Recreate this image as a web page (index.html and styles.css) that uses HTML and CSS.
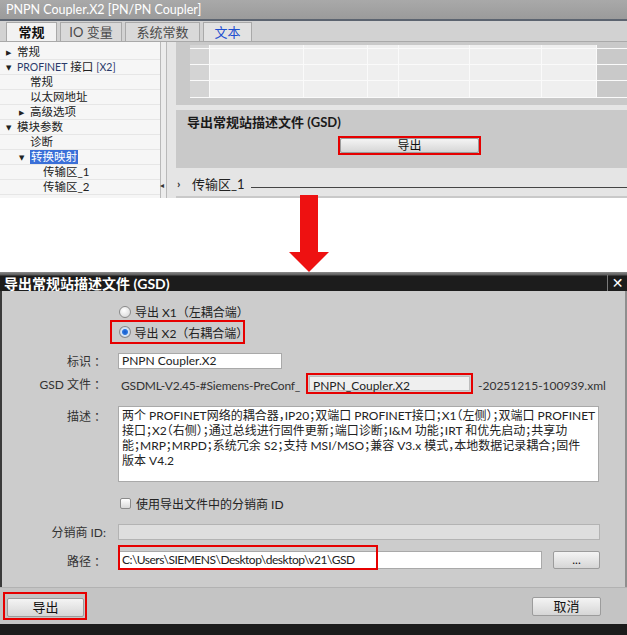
FILE: index.html
```html
<!DOCTYPE html>
<html lang="zh-CN">
<head>
  <meta charset="UTF-8">
  <title>导出常规站描述文件 (GSD)</title>
  <link rel="stylesheet" href="styles.css">
</head>
<body>
  <!-- 上半部分：巡视窗口截图 -->
  <div class="inspector">
    <div class="insp-title">PNPN Coupler.X2 [PN/PN Coupler]</div>
    <div class="tabs">
      <span class="tab tab-active">常规</span>
      <span class="tab">IO 变量</span>
      <span class="tab">系统常数</span>
      <span class="tab tab-blue">文本</span>
    </div>
    <div class="insp-body">
      <div class="tree">
        <div class="tree-row"><span class="tri">▶</span>常规</div>
        <div class="tree-row"><span class="tri">▼</span><span class="pn">PROFINET</span> 接口 <span class="pn">[X2]</span></div>
        <div class="tree-row lvl1">常规</div>
        <div class="tree-row lvl1">以太网地址</div>
        <div class="tree-row lvl1t"><span class="tri">▶</span>高级选项</div>
        <div class="tree-row"><span class="tri">▼</span>模块参数</div>
        <div class="tree-row lvl1">诊断</div>
        <div class="tree-row lvl1t"><span class="tri">▼</span><span class="sel">转换映射</span></div>
        <div class="tree-row lvl2">传输区_1</div>
        <div class="tree-row lvl2">传输区_2</div>
      </div>
      <div class="tree-scroll"><span class="scroll-arrow">◂</span></div>
      <div class="content">
        <div class="grid-area">
          <div class="grid">
            <div class="grid-row r0"><span class="gc head"></span><span class="gc w1"></span><span class="gc w2"></span><span class="gc w3"></span><span class="gc w4"></span><span class="gc w5"></span><span class="gc w6"></span></div>
            <div class="grid-row"><span class="gc head"></span><span class="gc w1"></span><span class="gc w2"></span><span class="gc w3"></span><span class="gc w4"></span><span class="gc w5"></span><span class="gc w6"></span></div>
            <div class="grid-row"><span class="gc head"></span><span class="gc w1"></span><span class="gc w2"></span><span class="gc w3"></span><span class="gc w4"></span><span class="gc w5"></span><span class="gc w6"></span></div>
            <div class="grid-row r3"><span class="gc head"></span><span class="gc w1"></span><span class="gc w2"></span><span class="gc w3"></span><span class="gc w4"></span><span class="gc w5"></span><span class="gc w6"></span></div>
          </div>
        </div>
        <div class="gsd-section">
          <div class="gsd-title">导出常规站描述文件 (GSD)</div>
          <div class="mark top-btn-mark"><button class="btn top-btn">导出</button></div>
        </div>
        <div class="group-row">
          <span class="chev">›</span>
          <span class="group-name">传输区_1</span>
          <span class="group-rule"></span>
        </div>
        <div class="bottom-strip"></div>
      </div>
    </div>
  </div>

  <!-- 箭头 -->
  <div class="arrow">
    <svg width="627" height="77" viewBox="0 0 627 77">
      <rect x="300" y="0" width="18" height="58" fill="#ee1111"/>
      <polygon points="289,57 329,57 309,77" fill="#ee1111"/>
    </svg>
  </div>

  <!-- 下半部分：导出对话框 -->
  <div class="dialog">
    <div class="dlg-title">
      <span>导出常规站描述文件 (GSD)</span>
      <span class="dlg-close">✕</span>
    </div>
    <div class="dlg-body">
      <div class="radio-row"><span class="radio"></span>导出 X1（左耦合端）</div>
      <div class="mark radio-mark"><span class="radio checked"></span>导出 X2（右耦合端）</div>

      <div class="field first">
        <span class="label">标识 ：</span>
        <div class="input name-input">PNPN Coupler.X2</div>
      </div>
      <div class="field gsd-field">
        <span class="label">GSD 文件 ：</span>
        <span class="gsd-prefix">GSDML-V2.45-#Siemens-PreConf_</span>
        <div class="mark gsd-mark"><div class="gsd-name">PNPN_Coupler.X2</div></div>
        <span class="gsd-suffix">-20251215-100939.xml</span>
      </div>
      <div class="field desc-field">
        <span class="label">描述 ：</span>
        <div class="input desc">
          <div class="desc-line">两个 PROFINET网络的耦合器，IP20；双端口 PROFINET接口；X1（左侧）；双端口 PROFINET</div>
          <div class="desc-line">接口；X2（右侧）；通过总线进行固件更新；端口诊断；I&amp;M 功能；IRT 和优先启动；共享功</div>
          <div class="desc-line">能；MRP；MRPD；系统冗余 S2；支持 MSI/MSO；兼容 V3.x 模式，本地数据记录耦合；固件</div>
          <div class="desc-line">版本 V4.2</div>
        </div>
      </div>
      <div class="check-row"><span class="checkbox"></span>使用导出文件中的分销商 ID</div>
      <div class="field">
        <span class="label">分销商 ID:</span>
        <div class="input disabled"></div>
      </div>
      <div class="field path-field">
        <span class="label">路径 ：</span>
        <div class="input path-input">
          C:\Users\SIEMENS\Desktop\desktop\v21\GSD
          <span class="path-mark"></span>
        </div>
        <button class="btn browse">...</button>
      </div>
    </div>
    <div class="dlg-foot">
      <div class="mark foot-mark"><button class="btn foot-btn">导出</button></div>
      <button class="btn foot-btn cancel">取消</button>
    </div>
    <div class="dlg-edge"></div>
  </div>
</body>
</html>
```

FILE: styles.css
```css
* {
  margin: 0;
  padding: 0;
  box-sizing: border-box;
}

body {
  width: 627px;
  background: #ffffff;
  font-family: "Lato", "Noto Sans CJK SC", sans-serif;
  font-size: 12px;
  color: #222;
}

/* ---------- 巡视窗口 ---------- */

.inspector {
  height: 198px;
  background: #cfcfcf;
  overflow: hidden;
}

.insp-title {
  height: 21px;
  padding-left: 6px;
  line-height: 19px;
  font-size: 12.5px;
  color: #ffffff;
  background: linear-gradient(#a9a9a9, #9b9b9b);
  border-bottom: 2px solid #5c6470;
}

.tabs {
  height: 21px;
  display: flex;
  align-items: flex-end;
  gap: 3px;
  padding-left: 6px;
  background: #d2d2d2;
  border-bottom: 1px solid #a9a9a9;
}

.tab {
  height: 19px;
  line-height: 18px;
  font-size: 13px;
  text-align: center;
  color: #4a4a4a;
  background: #d9d9d9;
  border: 1px solid #a9a9a9;
  border-bottom: none;
  overflow: hidden;
}

.tab:nth-child(1) { width: 51px; }
.tab:nth-child(2) { width: 62px; }
.tab:nth-child(3) { width: 75px; }
.tab:nth-child(4) { width: 49px; }

.tab-active {
  background: #f2f2f2;
  color: #111;
  font-weight: bold;
}

.tab-blue {
  background: #e2e2e2;
  color: #1f4fd0;
}

.insp-body {
  display: flex;
  height: 156px;
}

.tree {
  width: 160px;
  padding-top: 3px;
  background: #f6f6f6;
}

.tree-row {
  height: 15px;
  line-height: 14px;
  padding-left: 6px;
  font-size: 11.5px;
  color: #222;
  white-space: nowrap;
  overflow: hidden;
  border-bottom: 1px solid #e6e6e6;
}

.tree-row.lvl1 { padding-left: 30px; }
.tree-row.lvl1t { padding-left: 19px; }
.tree-row.lvl2 { padding-left: 43px; }

.tri {
  display: inline-block;
  width: 11px;
  font-family: "DejaVu Sans", sans-serif;
  font-size: 7px;
  vertical-align: 1px;
}

.pn {
  font-size: 10.5px;
  color: #2b3a6a;
}

.sel {
  display: inline-block;
  height: 14px;
  padding: 0 1px;
  background: #3a6fd8;
  color: #ffffff;
}

.tree-scroll {
  position: relative;
  width: 7px;
  background: #ececec;
  border-left: 1px solid #b9b9b9;
  border-right: 1px solid #b9b9b9;
}

.scroll-arrow {
  position: absolute;
  left: -1px;
  top: 139px;
  font-family: "DejaVu Sans", sans-serif;
  font-size: 8px;
  color: #333;
}

.content {
  flex: 1;
  padding-left: 9px;
  background: #e5e5e5;
  display: flex;
  flex-direction: column;
}

.grid-area {
  height: 63px;
  padding: 3px 0 0 14px;
  background: #c9c9c9;
}

.grid {
  display: flex;
  flex-direction: column;
}

.grid-row {
  display: flex;
  height: 16px;
  border-bottom: 1px solid #fafafa;
}

.grid-row.r0 { height: 4px; }
.grid-row.r3 { height: 17px; }

.gc {
  height: 100%;
  background: #efefef;
  border-right: 1px solid #fafafa;
}

.gc.head { width: 20px; background: #d4d4d4; }
.gc.w1 { width: 94px; }
.gc.w2 { width: 64px; }
.gc.w3 { width: 31px; }
.gc.w4 { width: 71px; }
.gc.w5 { width: 72px; }
.gc.w6 { width: 55px; }

.gsd-section {
  height: 58px;
  margin-top: 5px;
  background: #c9c9c9;
  display: flex;
  flex-direction: column;
}

.gsd-title {
  padding: 2px 0 0 11px;
  font-size: 13px;
  font-weight: bold;
  color: #1a1a1a;
}

.mark {
  border: 2px solid #e60000;
}

.top-btn-mark {
  width: 143px;
  height: 19px;
  margin: 5px 0 0 162px;
}

.btn {
  font-family: "Lato", "Noto Sans CJK SC", sans-serif;
  font-size: 12px;
  color: #111;
  background: linear-gradient(#f4f4f4, #d6d6d6);
  border: 1px solid #9c9c9c;
  border-radius: 2px;
}

.top-btn {
  display: block;
  width: 100%;
  height: 100%;
  line-height: 13px;
}

.group-row {
  height: 28px;
  display: flex;
  align-items: center;
  padding-top: 2px;
}

.chev {
  width: 16px;
  padding-left: 1px;
  font-size: 12px;
  font-weight: bold;
  color: #333;
}

.group-name {
  font-size: 13px;
  color: #222;
}

.group-rule {
  flex: 1;
  height: 1px;
  margin: 8px 0 0 6px;
  background: #444;
}

.bottom-strip {
  flex: 1;
  background: #c9c9c9;
}

/* ---------- 箭头 ---------- */

.arrow {
  height: 74px;
  margin-top: -3px;
  margin-bottom: 3px;
}

.arrow svg {
  display: block;
}

/* ---------- 对话框 ---------- */

.dialog {
  height: 363px;
  display: flex;
  flex-direction: column;
  background: #cccccc;
}

.dlg-title {
  height: 19px;
  display: flex;
  justify-content: space-between;
  align-items: center;
  padding: 3px 0 0 4px;
  font-size: 14px;
  font-weight: bold;
  color: #ffffff;
  background: linear-gradient(#8c8c8c, #5a5a5a 3px, #1c1c1c 4px, #1c1c1c);
}

.dlg-close {
  width: 20px;
  height: 16px;
  line-height: 16px;
  text-align: center;
  font-family: "DejaVu Sans", sans-serif;
  font-size: 14px;
  font-weight: bold;
  border-left: 1px solid #7a7a7a;
}

.dlg-body {
  height: 296px;
  padding-top: 12px;
  border-left: 2px solid #3a3a3a;
  border-right: 2px solid #8e8e8e;
}

.radio-row {
  height: 17px;
  display: flex;
  align-items: center;
  padding-left: 117px;
  color: #222;
}

.radio {
  width: 12px;
  height: 12px;
  margin-right: 4px;
  border: 1px solid #8a8a8a;
  border-radius: 50%;
  background: radial-gradient(circle at 40% 35%, #ffffff, #d2d2d2);
}

.radio.checked {
  background: radial-gradient(circle, #1658c8 0, #2c78e0 2.5px, #d8e6f6 3.5px, #b9c8da 6px);
}

.radio-mark {
  width: 135px;
  height: 24px;
  margin-left: 108px;
  display: flex;
  align-items: center;
  padding-left: 7px;
  color: #222;
}

.field {
  display: flex;
  align-items: center;
  margin-top: 4px;
}

.field.first { margin-top: 8px; }

.label {
  width: 104px;
  margin-right: 12px;
  text-align: right;
  color: #333;
  white-space: nowrap;
}

.input {
  height: 16px;
  line-height: 14px;
  padding-left: 3px;
  background: #ffffff;
  border: 1px solid #a9a9a9;
  white-space: nowrap;
}

.name-input {
  width: 164px;
}

.gsd-field {
  height: 21px;
}

.gsd-prefix {
  width: 188px;
  padding-left: 3px;
  padding-top: 3px;
  color: #333;
  white-space: nowrap;
  letter-spacing: -0.2px;
}

.gsd-mark {
  width: 167px;
  height: 21px;
  padding: 1px;
}

.gsd-name {
  height: 100%;
  padding: 1px 0 0 3px;
  background: #efefef;
  border: 1px solid #bdbdbd;
  color: #222;
}

.gsd-suffix {
  padding: 3px 0 0 5px;
  color: #333;
  white-space: nowrap;
}

.desc-field {
  align-items: flex-start;
  margin-top: 12px;
}

.desc-field .label {
  padding-top: 1px;
}

.desc {
  width: 481px;
  height: 76px;
  padding-top: 1px;
  line-height: 15px;
  overflow: hidden;
}

.desc-line {
  font-size: 12px;
  font-feature-settings: "halt";
}

.check-row {
  display: flex;
  align-items: center;
  height: 16px;
  margin-top: 13px;
  padding-left: 118px;
  color: #222;
}

.checkbox {
  width: 11px;
  height: 11px;
  margin-right: 5px;
  border: 1px solid #8a8a8a;
  border-radius: 2px;
  background: linear-gradient(#ffffff, #d8d8d8);
}

.check-row + .field {
  margin-top: 12px;
}

.input.disabled {
  width: 482px;
  background: #dedede;
  border-color: #b3b3b3;
}

.path-field {
  margin-top: 11px;
}

.path-input {
  position: relative;
  width: 424px;
  height: 18px;
  line-height: 16px;
  color: #222;
  letter-spacing: -0.5px;
}

.path-mark {
  position: absolute;
  left: -1px;
  top: -7px;
  width: 260px;
  height: 25px;
  border: 2px solid #e60000;
}

.browse {
  width: 47px;
  height: 18px;
  margin-left: 11px;
  line-height: 10px;
}

.dlg-foot {
  height: 37px;
  display: flex;
  justify-content: space-between;
  align-items: center;
  padding: 0 26px 0 3px;
  background: #c4c4c4;
  border-top: 1px solid #b2b2b2;
}

.foot-mark {
  width: 84px;
  height: 28px;
  padding: 4px 3px 3px 2px;
}

.foot-btn {
  width: 77px;
  height: 19px;
  font-size: 13px;
  line-height: 15px;
}

.foot-btn.cancel {
  width: 69px;
}

.dlg-edge {
  height: 11px;
  background: #1b1b1b;
}
```
